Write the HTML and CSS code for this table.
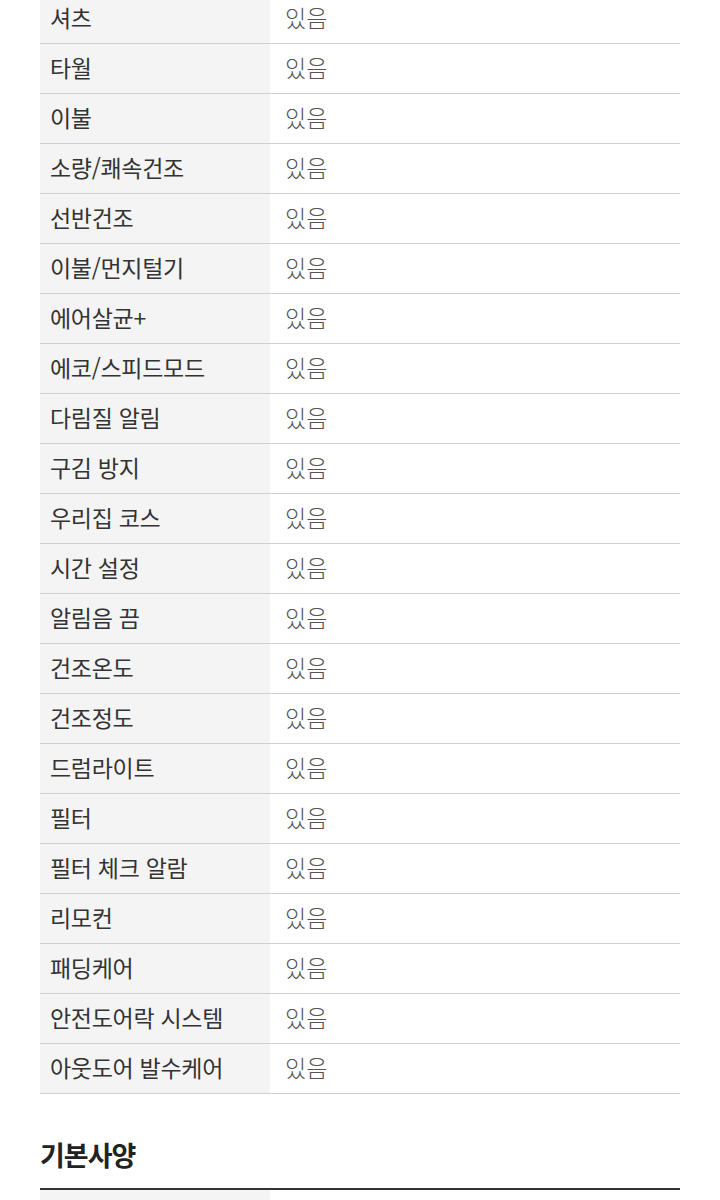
FILE: index.html
```html
<!DOCTYPE html>
<html lang="ko">
<head>
<meta charset="utf-8">
<link rel="stylesheet" href="styles.css">
</head>
<body>
<div class="page">
  <div class="spec">
    <div class="row"><div class="th">셔츠</div><div class="td">있음</div></div>
    <div class="row"><div class="th">타월</div><div class="td">있음</div></div>
    <div class="row"><div class="th">이불</div><div class="td">있음</div></div>
    <div class="row"><div class="th">소량/쾌속건조</div><div class="td">있음</div></div>
    <div class="row"><div class="th">선반건조</div><div class="td">있음</div></div>
    <div class="row"><div class="th">이불/먼지털기</div><div class="td">있음</div></div>
    <div class="row"><div class="th">에어살균+</div><div class="td">있음</div></div>
    <div class="row"><div class="th">에코/스피드모드</div><div class="td">있음</div></div>
    <div class="row"><div class="th">다림질 알림</div><div class="td">있음</div></div>
    <div class="row"><div class="th">구김 방지</div><div class="td">있음</div></div>
    <div class="row"><div class="th">우리집 코스</div><div class="td">있음</div></div>
    <div class="row"><div class="th">시간 설정</div><div class="td">있음</div></div>
    <div class="row"><div class="th">알림음 끔</div><div class="td">있음</div></div>
    <div class="row"><div class="th">건조온도</div><div class="td">있음</div></div>
    <div class="row"><div class="th">건조정도</div><div class="td">있음</div></div>
    <div class="row"><div class="th">드럼라이트</div><div class="td">있음</div></div>
    <div class="row"><div class="th">필터</div><div class="td">있음</div></div>
    <div class="row"><div class="th">필터 체크 알람</div><div class="td">있음</div></div>
    <div class="row"><div class="th">리모컨</div><div class="td">있음</div></div>
    <div class="row"><div class="th">패딩케어</div><div class="td">있음</div></div>
    <div class="row"><div class="th">안전도어락 시스템</div><div class="td">있음</div></div>
    <div class="row"><div class="th">아웃도어 발수케어</div><div class="td">있음</div></div>
  </div>
  <h2 class="section-title">기본사양</h2>
  <div class="spec">
    <div class="row"><div class="th">&nbsp;</div><div class="td">&nbsp;</div></div>
  </div>
</div>
</body>
</html>
```
FILE: styles.css
```css
html, body {
  margin: 0;
  padding: 0;
  background: #fff;
}
body {
  font-family: "Noto Sans CJK KR", "Noto Sans", sans-serif;
  color: #333;
}
.page {
  padding: 0 40px;
  margin-top: -6px;
}
.spec {
  display: flex;
  flex-direction: column;
}
.row {
  display: grid;
  grid-template-columns: 230px 1fr;
  height: 50px;
  box-sizing: border-box;
  border-bottom: 1px solid #cfcfcf;
}
.th {
  background: #f4f4f4;
  padding: 0 0 3px 10px;
  display: flex;
  align-items: center;
  font-size: 23px;
  color: #333;
  letter-spacing: -0.3px;
}
.td {
  padding: 0 0 3px 15px;
  display: flex;
  align-items: center;
  font-size: 23px;
  font-weight: 300;
  color: #555;
}
.section-title {
  margin: 0;
  padding: 43px 0 15px;
  font-size: 27px;
  font-weight: 700;
  color: #222;
  letter-spacing: -1px;
  line-height: 36px;
  border-bottom: 2px solid #333;
}
```
